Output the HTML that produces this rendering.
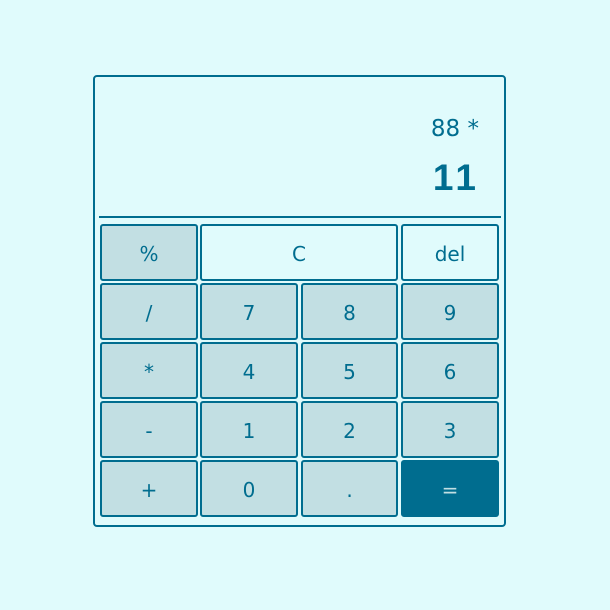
<!DOCTYPE html>
<html><head><style>
html,body{margin:0;padding:0;background:#e0fbfc;width:610px;height:610px;overflow:hidden;font-family:"DejaVu Sans","Liberation Sans",sans-serif;color:#006d8f}
.c{position:absolute;left:93px;top:75px;width:409px;height:448px;border:2px solid #006d8f;border-radius:4px}
.line{position:absolute;left:99px;top:216px;width:402px;height:2px;background:#006d8f}
.p{position:absolute;right:131px;top:116px;font-size:23px}
.r{position:absolute;right:130px;top:157px;font-size:37px;font-weight:bold;font-family:"Liberation Sans",sans-serif;letter-spacing:4px}
.b{position:absolute;box-sizing:border-box;height:57px;border:2px solid #006d8f;border-radius:3px;background:#c2dfe3;display:flex;align-items:center;justify-content:center;font-size:20px;padding-top:2px}
.w{background:#e0fbfc}.e{background:#006d8f;color:#c2dfe3}
</style></head><body>
<div class="c"></div><div class="line"></div>
<div class="p">88 *</div><div class="r">11</div>
<div class="b" style="left:100px;top:224px;width:98px">%</div>
<div class="b w" style="left:200px;top:224px;width:198px">C</div>
<div class="b w" style="left:401px;top:224px;width:98px">del</div>

<div class="b" style="left:100px;top:283px;width:98px">/</div>
<div class="b" style="left:200px;top:283px;width:98px">7</div>
<div class="b" style="left:301px;top:283px;width:97px">8</div>
<div class="b" style="left:401px;top:283px;width:98px">9</div>

<div class="b" style="left:100px;top:342px;width:98px">*</div>
<div class="b" style="left:200px;top:342px;width:98px">4</div>
<div class="b" style="left:301px;top:342px;width:97px">5</div>
<div class="b" style="left:401px;top:342px;width:98px">6</div>

<div class="b" style="left:100px;top:401px;width:98px">-</div>
<div class="b" style="left:200px;top:401px;width:98px">1</div>
<div class="b" style="left:301px;top:401px;width:97px">2</div>
<div class="b" style="left:401px;top:401px;width:98px">3</div>

<div class="b" style="left:100px;top:460px;width:98px">+</div>
<div class="b" style="left:200px;top:460px;width:98px">0</div>
<div class="b" style="left:301px;top:460px;width:97px">.</div>
<div class="b e" style="left:401px;top:460px;width:98px">=</div>
</body></html>
